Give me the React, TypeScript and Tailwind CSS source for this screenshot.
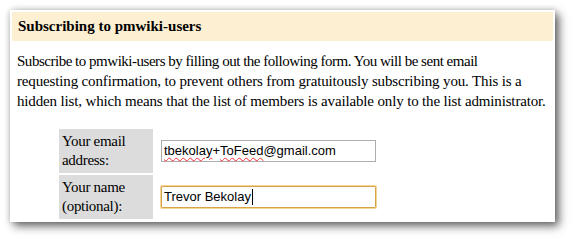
export default function App() {
  return (
    <div className="w-[573px] h-[240px] bg-white pt-[10px] pl-[10px] font-['Liberation_Serif',serif] text-black">
      <div className="w-[545px] h-[212px] bg-white p-[2px] shadow-[4px_4px_9px_rgba(0,0,0,0.6),0_0_6px_rgba(0,0,0,0.18)]">
        <div className="h-[29px] bg-[#fdefd1] pl-[6px] text-[15px] font-bold leading-[29px]">
          Subscribing to pmwiki-users
        </div>
        <div className="mt-[10px] pl-[5px] text-[15px] leading-[20px] whitespace-nowrap">
          <div className="tracking-[-0.48px]">Subscribe to pmwiki-users by filling out the following form. You will be sent email</div>
          <div className="tracking-[-0.15px]">requesting confirmation, to prevent others from gratuitously subscribing you. This is a</div>
          <div className="tracking-[-0.15px]">hidden list, which means that the list of members is available only to the list administrator.</div>
        </div>
        <div className="mt-[18px] ml-[47px] grid grid-cols-[94px_auto] gap-[2px] w-fit">
          <div className="h-[44px] bg-[#dcdcdc] px-[3px] py-[3px] text-[15px] tracking-[-0.3px] leading-[19px]">
            Your email
            <br />
            address:
          </div>
          <div className="flex items-center pl-[6px] pr-[4px]">
            <div className="w-[215px] h-[22px] border border-[#abadb3] pl-[2px] font-['Liberation_Sans',sans-serif] text-[13px] leading-[20px] text-black">
              <span className="underline decoration-wavy decoration-red-500 decoration-1 underline-offset-2">tbekolay</span>+<span className="underline decoration-wavy decoration-red-500 decoration-1 underline-offset-2">ToFeed</span>@gmail.com
            </div>
          </div>
          <div className="h-[44px] bg-[#dcdcdc] px-[3px] py-[3px] text-[15px] tracking-[-0.3px] leading-[19px]">
            Your name
            <br />
            (optional):
          </div>
          <div className="flex items-center pl-[6px] pr-[4px]">
            <div className="w-[215px] h-[22px] border border-[#d9a24a] ring-1 ring-[#f5d598] rounded-[1px] pl-[2px] font-['Liberation_Sans',sans-serif] text-[13px] leading-[20px] text-black flex items-center">
              <span>Trevor Bekolay</span>
              <span className="ml-[1px] inline-block w-[1px] h-[16px] bg-black" />
            </div>
          </div>
        </div>
      </div>
    </div>
  );
}
